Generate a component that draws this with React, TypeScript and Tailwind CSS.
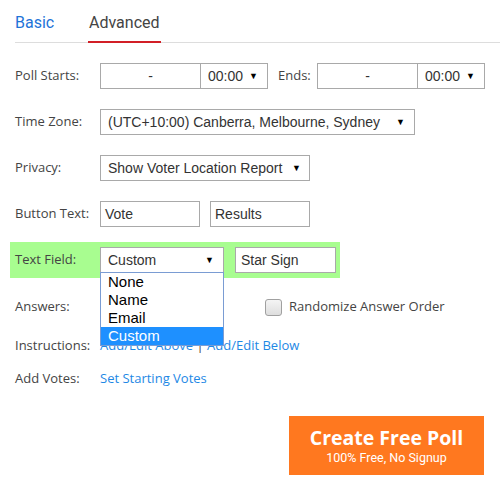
import React from "react";

const label = "w-[85px] shrink-0 text-[13px] text-[#444] font-['Open_Sans',sans-serif]";
const box = "h-[26px] border border-[#a9a9a9] bg-white text-[14px] text-[#333] font-['Liberation_Sans',Arial,sans-serif] flex items-center";

function Arrow() {
  return <span className="text-[9px] text-black leading-none">▼</span>;
}

function DateBox({ w }: { w: string }) {
  return <div className={`${box} ${w} justify-center`}>-</div>;
}

function TimeSelect() {
  return (
    <div className={`${box} w-[68px] -ml-px justify-between pl-[7px] pr-[9px]`}>
      <span>00:00</span>
      <Arrow />
    </div>
  );
}

export default function App() {
  const options = ["None", "Name", "Email", "Custom"];
  return (
    <div className="w-[500px] h-[490px] bg-white pl-[15px] relative overflow-hidden">
      {/* tabs */}
      <div className="flex items-end h-[43px] border-b border-[#ddd] font-['Roboto',sans-serif] text-[16px]">
        <div className="text-[#1e73d8] pb-[7px] w-[73px]">Basic</div>
        <div className="text-[#444] pb-[6px] border-b-2 border-[#d21f26] -mb-px px-px">Advanced</div>
      </div>

      <div className="flex items-center mt-[20px]">
        <span className={label}>Poll Starts:</span>
        <DateBox w="w-[101px]" />
        <TimeSelect />
        <span className="text-[13px] text-[#444] font-['Open_Sans',sans-serif] ml-[10px] w-[39px]">Ends:</span>
        <DateBox w="w-[101px]" />
        <TimeSelect />
      </div>

      <div className="flex items-center mt-[20px]">
        <span className={label}>Time Zone:</span>
        <div className={`${box} w-[315px] justify-between pl-[7px] pr-[9px]`}>
          <span>(UTC+10:00) Canberra, Melbourne, Sydney</span>
          <Arrow />
        </div>
      </div>

      <div className="flex items-center mt-[20px]">
        <span className={label}>Privacy:</span>
        <div className={`${box} w-[210px] justify-between pl-[7px] pr-[8px]`}>
          <span>Show Voter Location Report</span>
          <Arrow />
        </div>
      </div>

      <div className="flex items-center mt-[20px]">
        <span className={label}>Button Text:</span>
        <div className={`${box} w-[100px] pl-[4px]`}>Vote</div>
        <div className={`${box} w-[100px] pl-[4px] ml-[10px]`}>Results</div>
      </div>

      <div className="flex items-center mt-[15px] -ml-[5px] pl-[5px] py-[5px] w-[330px] bg-[#a8fd90]">
        <span className={label}>Text Field:</span>
        <div className="relative">
          <div className={`${box} w-[124px] border-[#7a9cd3] justify-between pl-[7px] pr-[9px]`}>
            <span>Custom</span>
            <Arrow />
          </div>
          {/* open dropdown list */}
          <div className="absolute left-0 top-[25px] w-[124px] z-10 bg-white border border-[#7a9cd3] font-['Liberation_Sans',Arial,sans-serif] text-[15px] text-black">
            {options.map((o) => (
              <div
                key={o}
                className={`h-[18px] leading-[18px] pl-[7px] ${o === "Custom" ? "bg-[#1e90ff] text-white" : ""}`}
              >
                {o}
              </div>
            ))}
          </div>
        </div>
        <div className={`${box} w-[101px] pl-[5px] ml-[11px]`}>Star Sign</div>
      </div>

      <div className="flex items-center mt-[16px] h-[26px]">
        <span className={label}>Answers:</span>
        <div className="ml-[165px] flex items-center">
          <span className="w-[17px] h-[17px] rounded-[3px] border border-[#a0a0a0] bg-gradient-to-b from-[#f4f4f4] to-[#dedede]" />
          <span className="ml-[7px] text-[13px] text-[#444] font-['Open_Sans',sans-serif]">Randomize Answer Order</span>
        </div>
      </div>

      <div className="flex items-center mt-[15px] h-[22px]">
        <span className={label}>Instructions:</span>
        <span className="text-[13px] font-['Open_Sans',sans-serif] text-[#1e88e5]">
          Add/Edit Above <span className="text-[#444]">|</span> Add/Edit Below
        </span>
      </div>

      <div className="flex items-center mt-[11px] h-[22px]">
        <span className={label}>Add Votes:</span>
        <span className="text-[13px] font-['Open_Sans',sans-serif] text-[#1e88e5]">Set Starting Votes</span>
      </div>

      <div className="flex justify-end pr-[16px] mt-[26px]">
        <button className="w-[195px] h-[59px] bg-[#ff781f] text-white flex flex-col items-center justify-center">
          <span className="font-['Open_Sans',sans-serif] font-bold text-[19.5px] leading-[24px]">Create Free Poll</span>
          <span className="font-['Roboto',sans-serif] text-[12.5px] leading-[16px]">100% Free, No Signup</span>
        </button>
      </div>
    </div>
  );
}
